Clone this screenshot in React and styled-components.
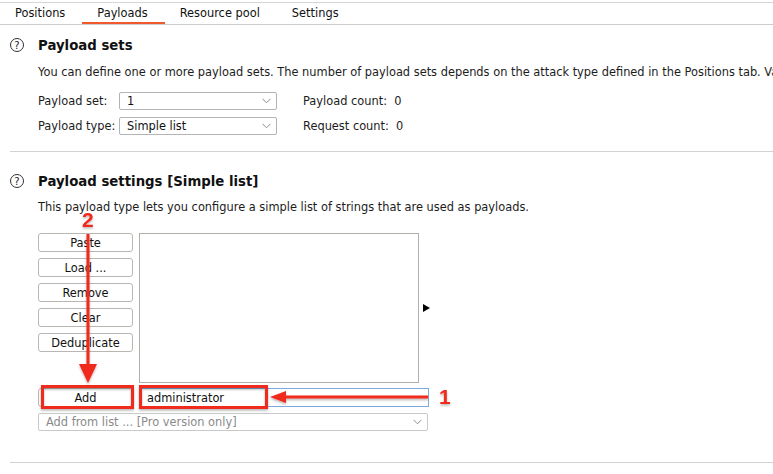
import React from "react";
import styled, { createGlobalStyle } from "styled-components";

const GlobalStyle = createGlobalStyle`
  html, body {
    margin: 0;
    padding: 0;
    background: #ffffff;
  }
  body {
    font-family: "DejaVu Sans", "Liberation Sans", sans-serif;
    font-size: 11.4px;
    color: #1c1c1c;
    overflow: hidden;
  }
`;

const Page = styled.div`
  position: relative;
  width: 773px;
  height: 474px;
  padding-top: 2px;
  box-sizing: border-box;
  overflow: hidden;
`;

const TabBar = styled.div`
  display: flex;
  height: 21px;
  border-top: 1px solid #d3d7d7;
  border-bottom: 1px solid #c9cdcd;
`;

const Tab = styled.div`
  position: relative;
  padding: 1px 17px 0 15px;
  line-height: 19px;
  color: #111;
  &::after {
    content: "";
    position: absolute;
    left: 0;
    right: 0;
    bottom: 0;
    height: 2px;
    background: ${(p) => (p.$active ? "#f1582e" : "transparent")};
  }
`;

const Section = styled.section`
  padding: ${(p) => p.$pad};
  border-bottom: ${(p) => (p.$rule ? "1px solid #d2d2d2" : "none")};
  margin-left: 10px;
  overflow: hidden;
`;

const Header = styled.div`
  display: flex;
  align-items: center;
  gap: 14px;
  height: 16px;
`;

const HelpIcon = styled.span`
  width: 14px;
  height: 14px;
  border: 1.5px solid #333;
  border-radius: 50%;
  display: flex;
  align-items: center;
  justify-content: center;
  font-size: 10px;
  color: #222;
  box-sizing: border-box;
  padding-top: 0.5px;
`;

const Title = styled.h2`
  margin: 0;
  font-size: 13.3px;
  font-weight: bold;
  color: #111;
  white-space: nowrap;
`;

const Desc = styled.p`
  margin: ${(p) => p.$margin};
  padding-left: 28px;
  white-space: nowrap;
  line-height: 14px;
`;

const FormGrid = styled.div`
  display: grid;
  grid-template-columns: 81px 158px 26px auto;
  row-gap: 7px;
  align-items: center;
  padding-left: 28px;
`;

const Select = styled.div`
  height: 18px;
  box-sizing: border-box;
  border: 1px solid ${(p) => (p.$disabled ? "#c9c9c9" : "#b4b4b4")};
  border-radius: 2px;
  display: flex;
  align-items: center;
  justify-content: space-between;
  padding: 0 5px 0 7px;
  color: ${(p) => (p.$disabled ? "#8a8a8a" : "#111")};
  background: #fff;
`;

const Chevron = () => (
  <svg width="9" height="6" viewBox="0 0 9 6">
    <path d="M0.5 0.8 L4.5 4.8 L8.5 0.8" fill="none" stroke="#8d8d8d" strokeWidth="1" />
  </svg>
);

const Count = styled.span`
  grid-column: 4;
  white-space: nowrap;
`;

const ListArea = styled.div`
  display: flex;
  gap: 6px;
  padding-left: 28px;
  margin-top: 19px;
`;

const ButtonCol = styled.div`
  display: flex;
  flex-direction: column;
  gap: 6px;
  width: 95px;
`;

const Btn = styled.div`
  height: 19px;
  box-sizing: border-box;
  border: 1px solid #bab6b1;
  border-radius: 3px;
  display: flex;
  align-items: center;
  justify-content: center;
  background: #fff;
  color: #111;
`;

const ListBox = styled.div`
  width: 280px;
  height: 150px;
  box-sizing: border-box;
  border: 1px solid #b3afab;
`;

const ScrollArrow = styled.div`
  align-self: center;
  margin-left: -2px;
  width: 0;
  height: 0;
  border-top: 4px solid transparent;
  border-bottom: 4px solid transparent;
  border-left: 7px solid #000;
`;

const AddRow = styled.div`
  display: flex;
  gap: 6px;
  padding-left: 28px;
  margin-top: 5px;
`;

const AddBtn = styled(Btn)`
  width: 95px;
`;

const TextInput = styled.div`
  width: 290px;
  height: 19px;
  box-sizing: border-box;
  border: 1px solid #7ea9dc;
  display: flex;
  align-items: center;
  padding-left: 7px;
  color: #111;
`;

const FromList = styled.div`
  padding-left: 28px;
  margin-top: 6px;
  width: 390px;
`;

const Overlay = styled.svg`
  position: absolute;
  left: 0;
  top: 0;
  pointer-events: none;
`;

const Num = styled.text`
  font-family: "Liberation Sans", Arial, sans-serif;
  font-weight: bold;
  font-size: 21px;
  fill: #f0291c;
`;

function App() {
  return (
    <Page>
      <GlobalStyle />
      <TabBar>
        <Tab>Positions</Tab>
        <Tab $active>Payloads</Tab>
        <Tab>Resource pool</Tab>
        <Tab>Settings</Tab>
      </TabBar>

      <Section $pad="12px 0 16px 0" $rule>
        <Header>
          <HelpIcon>?</HelpIcon>
          <Title>Payload sets</Title>
        </Header>
        <Desc $margin="12px 0 13px 0">
          You can define one or more payload sets. The number of payload sets depends on the attack type defined in the Positions tab. Various payload types are available.
        </Desc>
        <FormGrid>
          <span>Payload set:</span>
          <Select>
            <span>1</span>
            <Chevron />
          </Select>
          <Count>Payload count:&nbsp; 0</Count>
          <span>Payload type:</span>
          <Select>
            <span>Simple list</span>
            <Chevron />
          </Select>
          <Count>Request count:&nbsp; 0</Count>
        </FormGrid>
      </Section>

      <Section $pad="21px 0 31px 0" $rule>
        <Header>
          <HelpIcon>?</HelpIcon>
          <Title>Payload settings [Simple list]</Title>
        </Header>
        <Desc $margin="11px 0 0 0">
          This payload type lets you configure a simple list of strings that are used as payloads.
        </Desc>
        <ListArea>
          <ButtonCol>
            <Btn>Paste</Btn>
            <Btn>Load ...</Btn>
            <Btn>Remove</Btn>
            <Btn>Clear</Btn>
            <Btn>Deduplicate</Btn>
          </ButtonCol>
          <ListBox />
          <ScrollArrow />
        </ListArea>
        <AddRow>
          <AddBtn>Add</AddBtn>
          <TextInput>administrator</TextInput>
        </AddRow>
        <FromList>
          <Select $disabled>
            <span>Add from list ... [Pro version only]</span>
            <Chevron />
          </Select>
        </FromList>
      </Section>

      <Overlay width="773" height="474" viewBox="0 0 773 474">
        <defs>
          <filter id="shadow" x="-20%" y="-20%" width="140%" height="140%">
            <feDropShadow dx="0" dy="1.5" stdDeviation="1" floodColor="#000" floodOpacity="0.3" />
          </filter>
        </defs>
        <g filter="url(#shadow)">
          <rect x="42.5" y="386.5" width="90" height="21" fill="none" stroke="#f0291c" strokeWidth="3" />
          <rect x="140.5" y="386.5" width="126" height="21" fill="none" stroke="#f0291c" strokeWidth="3" />
          <line x1="428" y1="397" x2="282" y2="397" stroke="#f0291c" strokeWidth="3" />
          <polygon points="270,397 286,391 286,403" fill="#f0291c" />
          <line x1="88" y1="234" x2="88" y2="366" stroke="#f0291c" strokeWidth="3" />
          <polygon points="88,383 79,364 97,364" fill="#f0291c" />
          <Num x="439" y="404">1</Num>
          <Num x="82" y="227">2</Num>
        </g>
      </Overlay>
    </Page>
  );
}

export default App;
